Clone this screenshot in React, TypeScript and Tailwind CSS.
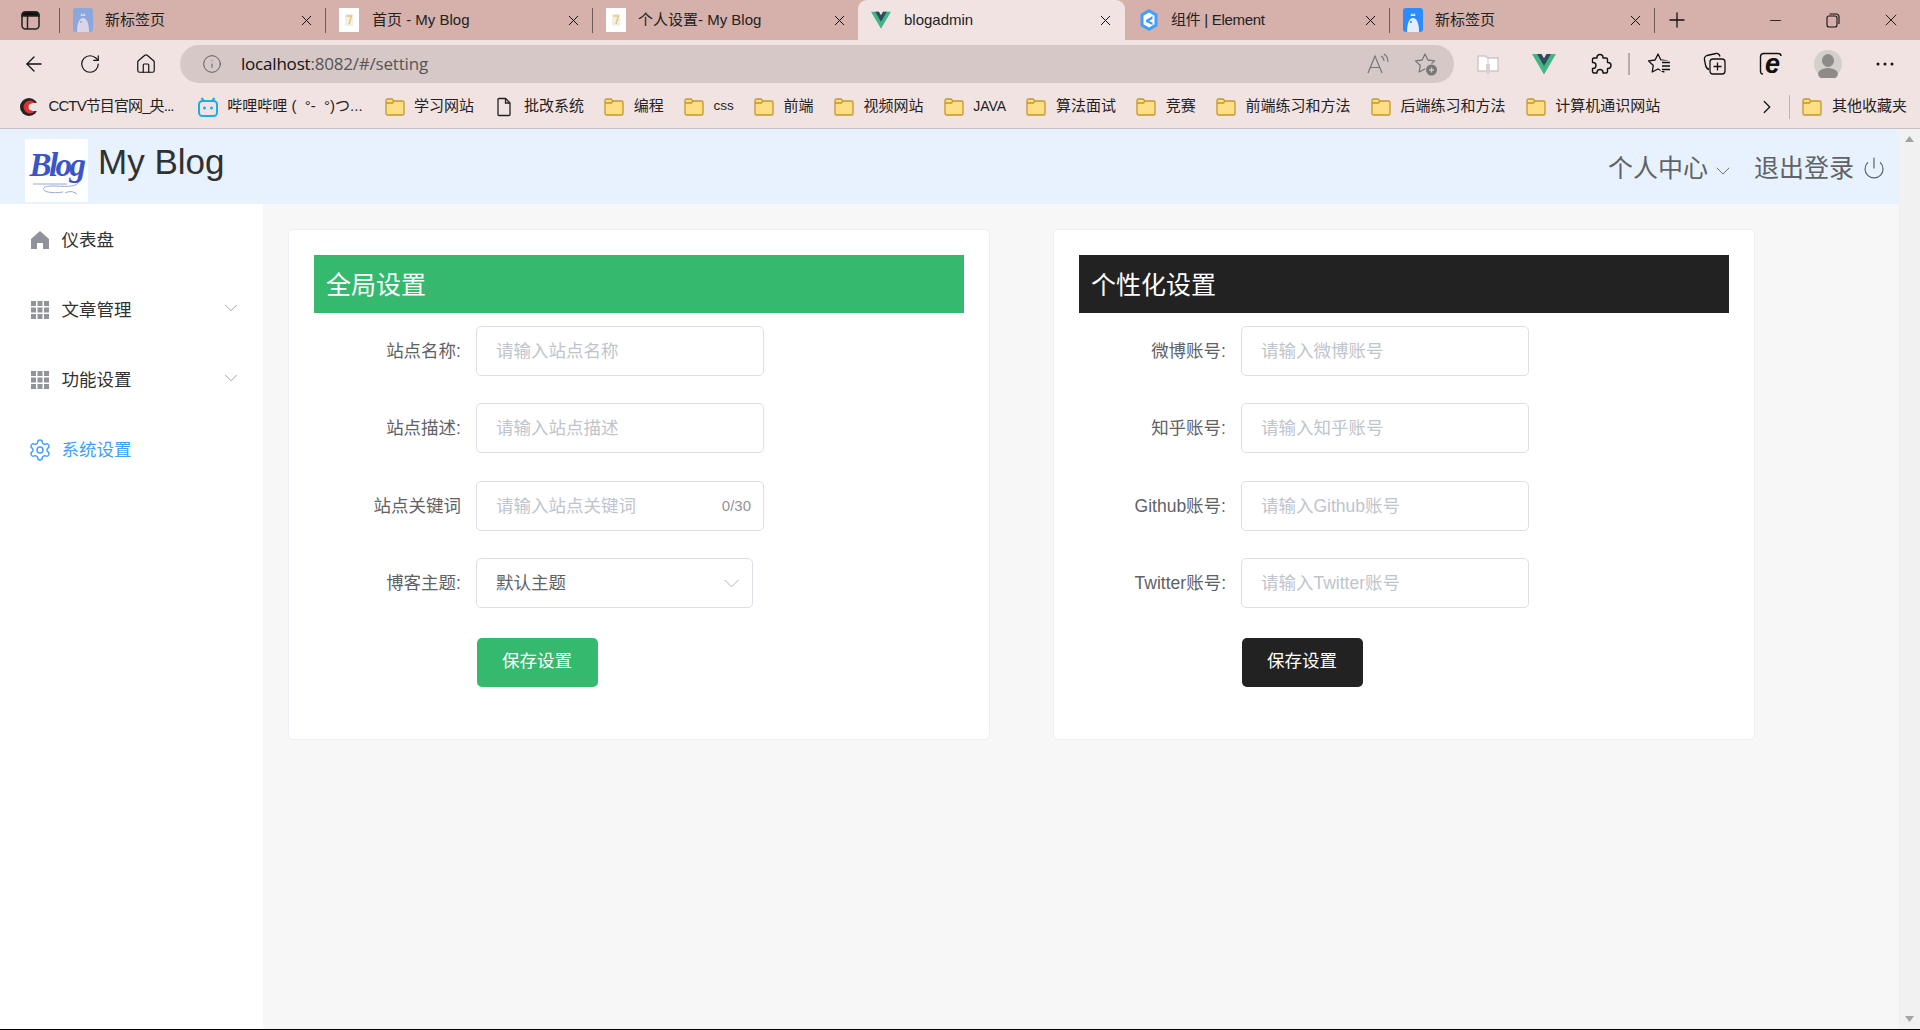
import React from "react";
import { ArrowLeft, RotateCw, Home as HomeOutline, Info, Plus, Minus, X, ChevronRight, ChevronDown, Power, Settings } from "lucide-react";

const Folder = () => (
  <svg width="20" height="20" viewBox="0 0 20 20" className="shrink-0">
    <path d="M1 5.500V3.600C1 2.700 1.700 2 2.600 2H7l2 2h8.400c.9 0 1.600.7 1.600 1.600v10.800c0 .9-.7 1.600-1.600 1.600H2.600C1.700 18 1 17.300 1 16.400z" fill="#ffdf85" stroke="#c2982c" strokeWidth="1.300" />
    <path d="M1 6h6.500L9 4" fill="none" stroke="#c2982c" strokeWidth="1.300" />
  </svg>
);

const FileIcon = () => (
  <svg width="20" height="20" viewBox="0 0 20 20" className="shrink-0" fill="none" stroke="#222" strokeWidth="1.300">
    <path d="M4 2.500C4 1.900 4.400 1.500 5 1.500h6.500L16 6v11.500c0 .6-.4 1-1 1H5c-.6 0-1-.4-1-1z" />
    <path d="M11.500 1.500V6H16" />
  </svg>
);

const Vue = ({ size = 20 }: { size?: number }) => (
  <svg width={size} height={size} viewBox="0 0 24 24" className="shrink-0">
    <path d="M0 2h9.500L12 6.500 14.500 2H24L12 22.500z" fill="#41b883" />
    <path d="M5 2h4.500L12 6.500 14.500 2H19L12 14z" fill="#35495e" />
  </svg>
);

const Bird = ({ bg, fg }: { bg: string; fg: string }) => (
  <svg width="20" height="24" viewBox="0 0 20 24" className="shrink-0">
    <rect width="20" height="24" rx="3" fill={bg} />
    <path d="M4 24c0-8 2-14 6-14s6 6 6 14z" fill={fg} />
    <path d="M7.500 8l1-3 1.500 2 1.500-2 1 3z" fill={fg} />
    <circle cx="8" cy="14" r="1" fill={bg} />
  </svg>
);

const BlogFav = () => (
  <svg width="20" height="24" viewBox="0 0 20 24" className="shrink-0">
    <rect width="20" height="24" fill="#fff" />
    <rect x="6" y="6" width="8" height="12" rx="1" fill="#f3efe3" />
    <path d="M7.500 8h5L10 16" fill="none" stroke="#e3c97e" strokeWidth="1.500" />
  </svg>
);

const ElementFav = () => (
  <svg width="20" height="24" viewBox="0 0 20 24" className="shrink-0">
    <path d="M10 1l8.500 5v12L10 23l-8.500-5V6z" fill="#409eff" />
    <path d="M10 4.500l5.500 3.200v8.600L10 19.500l-5.500-3.200V7.700z" fill="#fff" />
    <path d="M13.500 8L7 12v2l6.500 3v-2.500L10 13l3.500-2z" fill="#409eff" />
  </svg>
);

type TabDef = { w: string; icon: React.ReactNode; title: string; active?: boolean; text: string };

const tabs: TabDef[] = [
  { w: "w-[266px]", icon: <Bird bg="#8aa8dd" fg="#d9d5e4" />, title: "新标签页", text: "ml-[12px] text-[15px]" },
  { w: "w-[267px]", icon: <BlogFav />, title: "首页 - My Blog", text: "ml-[13px] text-[15px]" },
  { w: "w-[266px]", icon: <BlogFav />, title: "个人设置- My Blog", text: "ml-[12px] text-[15px]" },
  { w: "w-[267px]", icon: <Vue />, title: "blogadmin", active: true, text: "ml-[13px] text-[15px]" },
  { w: "w-[264px]", icon: <ElementFav />, title: "组件 | Element", text: "ml-[12px] text-[15px] tracking-[-0.3px]" },
  { w: "w-[265px]", icon: <Bird bg="#2b8cff" fg="#e6eefb" />, title: "新标签页", text: "ml-[12px] text-[15px]" },
];

const TabBar = () => (
  <div className="flex h-[40px] shrink-0 items-center bg-[#d6b0aa]">
    <div className="flex h-full w-[59px] shrink-0 items-center pl-[21px]">
      <svg width="19" height="19" viewBox="0 0 19 19" fill="none" stroke="#222" strokeWidth="1.500">
        <rect x="1" y="1" width="17" height="17" rx="3.500" />
        <path d="M1 4.500C1 2.500 2.500 1 4.500 1h10C16.500 1 18 2.500 18 4.500V5H1z" fill="#111" />
        <path d="M6.500 5v13" />
      </svg>
    </div>
    {tabs.map((t, i) => (
      <div
        key={i}
        className={
          t.active
            ? `${t.w} flex h-full shrink-0 items-center rounded-t-[9px] bg-[#f2e3e3] pl-[13px] pr-[11px]`
            : `${t.w} flex h-full shrink-0 items-center pl-[14px] pr-[10px]`
        }
      >
        <div className="flex h-full items-center">{t.icon}</div>
        <span className={`${t.text} flex-1 whitespace-nowrap text-[#222]`}>{t.title}</span>
        <X size={17} strokeWidth={1.400} color="#111" />
      </div>
    ))}
    <div className="flex h-full w-[46px] items-center justify-center">
      <Plus size={24} strokeWidth={1.300} color="#111" />
    </div>
    <div className="ml-auto flex h-full items-center">
      <div className="flex w-[58px] justify-center"><Minus size={17} strokeWidth={1.200} color="#111" /></div>
      <div className="flex w-[58px] justify-center">
        <svg width="14" height="15" viewBox="0 0 14 15" fill="none" stroke="#111" strokeWidth="1.100">
          <rect x="1" y="3" width="10" height="11" rx="2" />
          <path d="M3.500 1h6.500c1.700 0 3 1.300 3 3v7" />
        </svg>
      </div>
      <div className="flex w-[58px] justify-center"><X size={20} strokeWidth={1.100} color="#111" /></div>
    </div>
  </div>
);

const TabSeparators = () => (
  <>
    <div className="absolute left-[59px] top-[8px] h-[25px] w-px bg-[#6f5a56]" />
    <div className="absolute left-[325px] top-[8px] h-[25px] w-px bg-[#6f5a56]" />
    <div className="absolute left-[592px] top-[8px] h-[25px] w-px bg-[#6f5a56]" />
    <div className="absolute left-[1389px] top-[8px] h-[25px] w-px bg-[#6f5a56]" />
    <div className="absolute left-[1654px] top-[8px] h-[25px] w-px bg-[#6f5a56]" />
  </>
);

const ToolBtn = ({ children }: { children: React.ReactNode }) => (
  <div className="flex h-[38px] w-[56px] shrink-0 items-center justify-center">{children}</div>
);

const STAR = "M11 2l2.900 6 6.600.9-4.800 4.600 1.100 6.500L11 17l-5.800 3 1.100-6.500L1.500 8.900l6.600-.9z";

const Toolbar = () => (
  <div className="flex h-[45px] shrink-0 items-start bg-[#f2e3e3] pl-[6px] pt-[5px]">
    <ToolBtn><ArrowLeft size={24} strokeWidth={1.300} color="#111" /></ToolBtn>
    <ToolBtn><RotateCw size={22} strokeWidth={1.300} color="#111" /></ToolBtn>
    <ToolBtn><HomeOutline size={22} strokeWidth={1.300} color="#111" /></ToolBtn>
    <div className="ml-[6px] flex h-[38px] w-[1274px] shrink-0 items-center rounded-[19px] bg-[#d5c8c7] pl-[22px] pr-[16px]">
      <Info size={20} strokeWidth={1.100} color="#555" />
      <span className="ml-[19px] font-['Open_Sans','Noto_Sans_CJK_SC',sans-serif] text-[17px] tracking-[-0.2px] text-[#555]">
        <span className="text-[#111]">localhost</span>:8082/#/setting
      </span>
      <div className="ml-auto flex items-center gap-[24px]">
        <svg width="24" height="24" viewBox="0 0 24 24" fill="none" stroke="#777" strokeWidth="1.200">
          <path d="M2 21L9 4l7 17M4.500 15.500h9" />
          <path d="M15 4c2 1 3 3 3 5M18 2c3 2 4 5 4 8" />
        </svg>
        <svg width="24" height="24" viewBox="0 0 24 24">
          <path d={STAR} fill="none" stroke="#777" strokeWidth="1.300" strokeLinejoin="round" />
          <circle cx="17.500" cy="18" r="6.500" fill="#d5c8c7" />
          <circle cx="17.500" cy="18" r="5.500" fill="#777" />
          <path d="M15 18h5M17.500 15.500v5" stroke="#d5c8c7" strokeWidth="1.300" />
        </svg>
      </div>
    </div>
    <div className="ml-[6px] flex">
      <ToolBtn>
        <svg width="22" height="24" viewBox="0 0 22 24">
          <path d="M1 4h7l3 2h10v13H1z" fill="#fff" stroke="#cfc8c6" strokeWidth="1.500" />
          <path d="M11 6v13" stroke="#cfc8c6" />
          <path d="M9 12h4v6h3l-5 4.500L6 18h3z" fill="#d8d2d0" />
        </svg>
      </ToolBtn>
      <ToolBtn><Vue size={24} /></ToolBtn>
      <ToolBtn>
        <svg width="24" height="24" viewBox="0 0 24 24" fill="none" stroke="#111" strokeWidth="1.400" strokeLinejoin="round">
          <path d="M9 5.500a3 3 0 1 1 6 0V6h3a1.500 1.500 0 0 1 1.500 1.500v3h.5a3 3 0 1 1 0 6h-.5v3a1.500 1.500 0 0 1-1.500 1.500h-3v-.5a3 3 0 1 0-6 0v.5H6a1.500 1.500 0 0 1-1.500-1.500v-3H5a3 3 0 1 0 0-6h-.5v-3A1.500 1.500 0 0 1 6 6h3z" />
        </svg>
      </ToolBtn>
      <div className="mt-[8px] h-[22px] w-[2px] shrink-0 bg-[#b5abab]" />
      <div className="w-px" />
      <ToolBtn>
        <svg width="24" height="24" viewBox="0 0 24 24" fill="none" stroke="#111" strokeWidth="1.300" strokeLinejoin="round">
          <path d={STAR} />
          <rect x="13.500" y="8.500" width="10" height="10.500" fill="#f2e3e3" stroke="none" />
          <path d="M15 10.500h8M15 14h8M15 17.500h8" />
        </svg>
      </ToolBtn>
      <ToolBtn>
        <svg width="24" height="24" viewBox="0 0 24 24" fill="none" stroke="#111" strokeWidth="1.300">
          <path d="M6 17.500C4 17 3 15.500 2.500 13L1.500 8C1 5.500 2.500 4 4 3.500l9-2c2-.3 3.500 1 4 3" />
          <rect x="7" y="7" width="15" height="15" rx="3" />
          <path d="M14.500 10.500v8M10.500 14.500h8" />
        </svg>
      </ToolBtn>
      <ToolBtn>
        <div className="relative h-[24px] w-[24px]">
          <svg width="24" height="24" viewBox="0 0 24 24" fill="none" stroke="#111" strokeWidth="1.400">
            <path d="M4 22C2 22 1.500 20.500 1.500 19V5C1.500 3 3 1.500 5 1.500h14c1.500 0 3 1 3 2.500" />
          </svg>
          <span className="absolute left-[6px] top-[-5px] font-['Liberation_Sans',sans-serif] text-[27px] font-bold italic leading-[34px] text-[#111]">e</span>
        </div>
      </ToolBtn>
      <div className="w-px" />
      <ToolBtn>
        <svg width="28" height="28" viewBox="0 0 28 28">
          <circle cx="14" cy="14" r="14" fill="#d3cfcb" />
          <ellipse cx="14" cy="10.500" rx="6" ry="6.500" fill="#8e8a87" />
          <ellipse cx="14" cy="24" rx="10" ry="6" fill="#8e8a87" />
        </svg>
      </ToolBtn>
      <div className="w-px" />
      <ToolBtn>
        <svg width="18" height="4" viewBox="0 0 18 4" fill="#111">
          <circle cx="2" cy="2" r="1.500" />
          <circle cx="9" cy="2" r="1.500" />
          <circle cx="16" cy="2" r="1.500" />
        </svg>
      </ToolBtn>
    </div>
  </div>
);

const Bookmark = ({ icon, label, cls }: { icon?: React.ReactNode; label: string; cls?: string }) => (
  <div className="flex shrink-0 items-center">
    {icon ?? <Folder />}
    <span className={`ml-[9.500px] whitespace-nowrap text-[#222] ${cls ?? "text-[15px]"}`}>{label}</span>
  </div>
);

const bookmarks: [string, string?][] = [
  ["编程"],
  ["css", "text-[13.500px]"],
  ["前端"],
  ["视频网站"],
  ["JAVA", "text-[14px]"],
  ["算法面试"],
  ["竞赛"],
  ["前端练习和方法"],
  ["后端练习和方法"],
  ["计算机通识网站"],
];

const Bookmarks = () => (
  <div className="flex h-[44px] shrink-0 items-center gap-[20.300px] border-b border-[#c9c1c1] bg-[#f2e3e3] pl-[19px]">
    <Bookmark
      label="CCTV节目官网_央..."
      cls="w-[129px] text-[15px] tracking-[-0.9px]"
      icon={
        <svg width="20" height="20" viewBox="0 0 20 20" className="shrink-0">
          <circle cx="10" cy="10" r="9" fill="#222" />
          <circle cx="11" cy="10" r="6.500" fill="#e0312f" />
          <circle cx="13" cy="10" r="3.500" fill="#f2e3e3" />
          <path d="M13 6h6v8h-6z" fill="#f2e3e3" />
        </svg>
      }
    />
    <Bookmark
      label={"哔哩哔哩 (\u00a0 °-\u00a0 °)つ..."}
      cls="w-[137px] text-[15px]"
      icon={
        <svg width="20" height="20" viewBox="0 0 20 20" className="shrink-0">
          <rect x="1" y="4" width="18" height="15" rx="3.500" fill="none" stroke="#19aee5" strokeWidth="2" />
          <path d="M6 4L3.500 1M14 4l2.500-3" stroke="#19aee5" strokeWidth="2" />
          <circle cx="6.500" cy="11" r="1.500" fill="#19aee5" />
          <circle cx="13.500" cy="11" r="1.500" fill="#19aee5" />
        </svg>
      }
    />
    <Bookmark label="学习网站" />
    <Bookmark label="批改系统" icon={<FileIcon />} />
    {bookmarks.map(([b, c]) => (
      <Bookmark key={b} label={b} cls={c} />
    ))}
    <div className="ml-auto flex items-center">
      <ChevronRight size={22} strokeWidth={1.300} color="#111" />
      <div className="ml-[11px] mr-[12px] h-[24px] w-px bg-[#bdb3b3]" />
      <Bookmark label="其他收藏夹" />
      <div className="w-[13px]" />
    </div>
  </div>
);

const Grid3 = () => (
  <svg width="18" height="18" viewBox="0 0 18 18" fill="#909399">
    {[0, 6.500, 13].map((x) =>
      [0, 6.500, 13].map((y) => <rect key={`${x}-${y}`} x={x} y={y} width="5" height="5" />)
    )}
  </svg>
);

const HomeIcon = () => (
  <svg width="18" height="18" viewBox="0 0 18 18" fill="#909399">
    <path d="M9 0l9 8v10h-6v-6H6v6H0V8z" />
  </svg>
);

const SideItem = ({ icon, label, sub, active }: { icon: React.ReactNode; label: string; sub?: boolean; active?: boolean }) => (
  <div className="flex h-[70px] items-center pl-[31px]">
    <div className="flex w-[30.500px] shrink-0 items-center">{icon}</div>
    <span className={active ? "text-[17.500px] text-[#409eff]" : "text-[17.500px] text-[#303133]"}>{label}</span>
    {sub && (
      <div className="ml-auto mr-[21px] mb-[4px]">
        <ChevronDown size={22} strokeWidth={0.900} color="#909399" />
      </div>
    )}
  </div>
);

const Sidebar = () => (
  <div className="w-[263px] shrink-0 bg-white pt-[1px]">
    <SideItem icon={<HomeIcon />} label="仪表盘" />
    <SideItem icon={<Grid3 />} label="文章管理" sub />
    <SideItem icon={<Grid3 />} label="功能设置" sub />
    <SideItem icon={<div className="-ml-[3px]"><Settings size={24} strokeWidth={1.400} color="#409eff" /></div>} label="系统设置" active />
  </div>
);

const Row = ({ label, children }: { label: string; children: React.ReactNode }) => (
  <div className="mb-[27px] flex h-[50px] items-center last:mb-0 [&:nth-child(2)]:mb-[28px]">
    <div className="w-[147px] shrink-0 text-right text-[17.500px] text-[#606266]">{label}</div>
    <div className="ml-[15px]">{children}</div>
  </div>
);

const Field = ({ placeholder, count }: { placeholder: string; count?: string }) => (
  <div className="flex h-[50px] w-[288px] items-center rounded-[5px] border border-[#dcdfe6] bg-white pl-[19px] pr-[12px]">
    <input
      placeholder={placeholder}
      className="min-w-0 flex-1 bg-transparent text-[17.500px] text-[#606266] outline-none placeholder:text-[#c0c4cc]"
    />
    {count && <span className="text-[15px] text-[#909399]">{count}</span>}
  </div>
);

const Card = ({
  title,
  headCls,
  btnCls,
  children,
}: {
  title: string;
  headCls: string;
  btnCls: string;
  children: React.ReactNode;
}) => (
  <div className="h-[511px] w-[702px] shrink-0 rounded-[5px] border border-[#ebeef5] bg-white p-[25px]">
    <div className={`flex h-[58px] items-center pl-[12px] pt-[4px] text-[25px] text-white ${headCls}`}>{title}</div>
    <div className="mt-[13px]">{children}</div>
    <div className="ml-[162.500px] mt-[29.500px]">
      <button className={`h-[49px] w-[121px] rounded-[5px] pb-[2px] text-[17.500px] text-white ${btnCls}`}>保存设置</button>
    </div>
  </div>
);

const Scrollbar = () => (
  <div className="flex w-[21px] shrink-0 flex-col items-center justify-between bg-[#f1f1f1] py-[7px]">
    <svg width="9" height="6" viewBox="0 0 9 6" fill="#a3a3a3"><path d="M4.500 0L9 6H0z" /></svg>
    <svg width="9" height="6" viewBox="0 0 9 6" fill="#a3a3a3"><path d="M0 0h9L4.500 6z" /></svg>
  </div>
);

export default function App() {
  return (
    <div className="relative flex h-[1030px] w-[1920px] flex-col overflow-hidden border-b border-black bg-[#f7f7f8] font-['Liberation_Sans','Noto_Sans_CJK_SC',sans-serif]">
      <TabBar />
      <TabSeparators />
      <Toolbar />
      <Bookmarks />
      <div className="flex min-h-0 flex-1">
        <div className="flex min-w-0 flex-1 flex-col">
          <header className="flex h-[75px] shrink-0 items-end bg-[#e8f2fe] pb-[2px] pl-[25px] pr-[13px]">
            <div className="flex h-[63px] w-[63px] shrink-0 flex-col items-center justify-center bg-white pt-[4px]">
              <span className="font-['Liberation_Serif',serif] text-[33px] font-bold italic leading-[32px] tracking-[-2.500px] text-[#3a55c8]">Blog</span>
              <svg width="52" height="16" viewBox="0 0 52 16" fill="none" stroke="#9aa6d8" strokeWidth="1">
                <path d="M2 3h34M48 1c-4 6-16 4-26 4-8 0-12 2-8 5 4 2 12 2 18 1" />
                <path d="M34 12c4-2 8-2 12 1" />
              </svg>
            </div>
            <span className="mb-[18px] ml-[10px] text-[35px] leading-[44px] text-[#303133]">My Blog</span>
            <div className="mb-[14px] ml-auto flex items-center text-[25px] leading-[40px] text-[#606266]">
              <span>个人中心</span>
              <span className="ml-[3px] mt-[5px]"><ChevronDown size={24} strokeWidth={0.900} color="#606266" /></span>
              <span className="ml-[19px]">退出登录</span>
              <span className="ml-[8px] mb-[1px]"><Power size={24} strokeWidth={1.200} color="#606266" /></span>
            </div>
          </header>
          <div className="flex min-h-0 flex-1">
            <Sidebar />
            <main className="flex flex-1 items-start gap-[63px] pl-[25px] pt-[25px]">
              <Card title="全局设置" headCls="bg-[#35b96e]" btnCls="bg-[#35b96e]">
                <Row label="站点名称:"><Field placeholder="请输入站点名称" /></Row>
                <Row label="站点描述:"><Field placeholder="请输入站点描述" /></Row>
                <Row label="站点关键词"><Field placeholder="请输入站点关键词" count="0/30" /></Row>
                <Row label="博客主题:">
                  <div className="flex h-[50px] w-[277px] items-center justify-between rounded-[5px] border border-[#dcdfe6] bg-white pl-[19px] pr-[7px] text-[17.500px] text-[#606266]">
                    <span>默认主题</span>
                    <ChevronDown size={27} strokeWidth={0.800} color="#a8abb2" />
                  </div>
                </Row>
              </Card>
              <Card title="个性化设置" headCls="bg-[#222222]" btnCls="bg-[#222222]">
                <Row label="微博账号:"><Field placeholder="请输入微博账号" /></Row>
                <Row label="知乎账号:"><Field placeholder="请输入知乎账号" /></Row>
                <Row label="Github账号:"><Field placeholder="请输入Github账号" /></Row>
                <Row label="Twitter账号:"><Field placeholder="请输入Twitter账号" /></Row>
              </Card>
            </main>
          </div>
        </div>
        <Scrollbar />
      </div>
    </div>
  );
}
